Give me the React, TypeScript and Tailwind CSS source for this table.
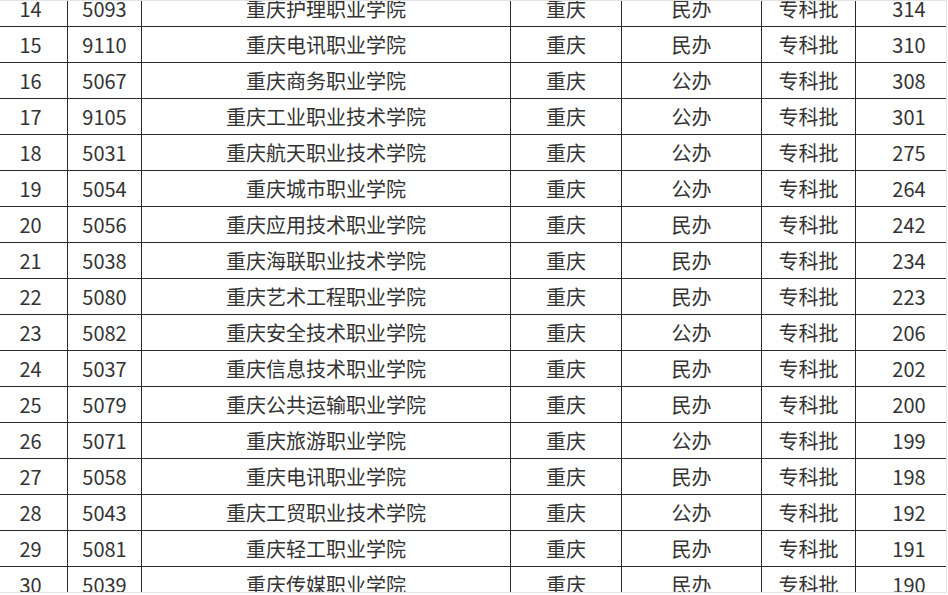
const rows: [string, string, string, string, string, string, string][] = [
  ["14", "5093", "重庆护理职业学院", "重庆", "民办", "专科批", "314"],
  ["15", "9110", "重庆电讯职业学院", "重庆", "民办", "专科批", "310"],
  ["16", "5067", "重庆商务职业学院", "重庆", "公办", "专科批", "308"],
  ["17", "9105", "重庆工业职业技术学院", "重庆", "公办", "专科批", "301"],
  ["18", "5031", "重庆航天职业技术学院", "重庆", "公办", "专科批", "275"],
  ["19", "5054", "重庆城市职业学院", "重庆", "公办", "专科批", "264"],
  ["20", "5056", "重庆应用技术职业学院", "重庆", "民办", "专科批", "242"],
  ["21", "5038", "重庆海联职业技术学院", "重庆", "民办", "专科批", "234"],
  ["22", "5080", "重庆艺术工程职业学院", "重庆", "民办", "专科批", "223"],
  ["23", "5082", "重庆安全技术职业学院", "重庆", "公办", "专科批", "206"],
  ["24", "5037", "重庆信息技术职业学院", "重庆", "民办", "专科批", "202"],
  ["25", "5079", "重庆公共运输职业学院", "重庆", "民办", "专科批", "200"],
  ["26", "5071", "重庆旅游职业学院", "重庆", "公办", "专科批", "199"],
  ["27", "5058", "重庆电讯职业学院", "重庆", "民办", "专科批", "198"],
  ["28", "5043", "重庆工贸职业技术学院", "重庆", "公办", "专科批", "192"],
  ["29", "5081", "重庆轻工职业学院", "重庆", "民办", "专科批", "191"],
  ["30", "5039", "重庆传媒职业学院", "重庆", "民办", "专科批", "190"],
];

export default function App() {
  return (
    <div className="h-[595px] w-[948px] overflow-hidden bg-white">
      <div className="h-[593px] w-[947px] overflow-hidden border-t border-r border-b border-[#e4e4e4]">
        <div
          className="-mt-[10px] -ml-[6px] w-[968px] text-[20px] text-[#333]"
          style={{ fontFamily: '"Noto Sans CJK SC", "Noto Sans", sans-serif' }}
        >
          {rows.map((r) => (
            <div
              key={r[0]}
              className="grid h-[36px] grid-cols-[74px_74px_369px_111px_140px_94px_106px] border-b border-[#2a2a2a]"
            >
              {r.map((c, i) => (
                <div
                  key={i}
                  className={
                    "flex items-center justify-center leading-none " +
                    (i < 6 ? "border-r border-[#2a2a2a]" : "")
                  }
                >
                  {c}
                </div>
              ))}
            </div>
          ))}
        </div>
      </div>
    </div>
  );
}
